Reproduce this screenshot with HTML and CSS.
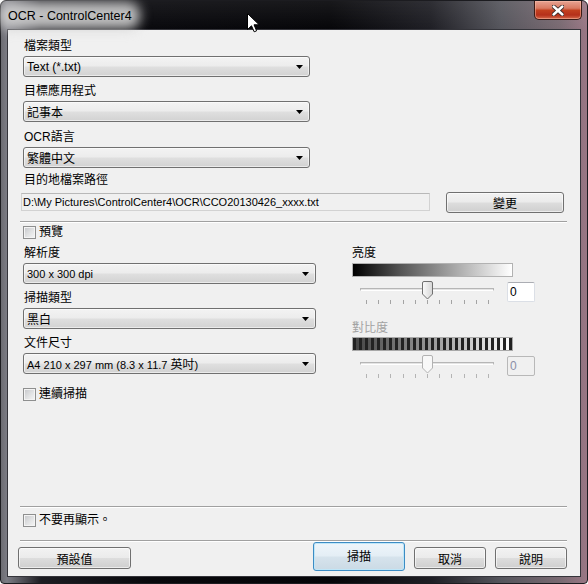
FILE: index.html
```html
<!DOCTYPE html>
<html>
<head>
    <link rel="stylesheet" href="styles.css">
</head>

<body>
<div class="window">
    <div class="titlebar">
        <div class="title">OCR - ControlCenter4</div>
        <div class="close-btn">
            <svg width="12" height="11" viewBox="0 0 12 11">
                <path d="M1 1 L11 10 M11 1 L1 10" stroke="#3a2a28" stroke-width="4.2" stroke-linecap="round"/>
                <path d="M1.6 1.5 L10.4 9.5 M10.4 1.5 L1.6 9.5" stroke="#fff" stroke-width="2.4" stroke-linecap="round"/>
            </svg>
        </div>
    </div>

    <div class="client">
        <div class="lbl first">檔案類型</div>
        <div class="combo"><span>Text (*.txt)</span><svg class="arrow" width="7" height="4" viewBox="0 0 7 4"><path d="M0 0H7L3.5 4Z"/></svg></div>

        <div class="lbl">目標應用程式</div>
        <div class="combo"><span>記事本</span><svg class="arrow" width="7" height="4" viewBox="0 0 7 4"><path d="M0 0H7L3.5 4Z"/></svg></div>

        <div class="lbl lbl-loose">OCR語言</div>
        <div class="combo"><span>繁體中文</span><svg class="arrow" width="7" height="4" viewBox="0 0 7 4"><path d="M0 0H7L3.5 4Z"/></svg></div>

        <div class="lbl lbl-close">目的地檔案路徑</div>
        <div class="path-row">
            <div class="path-box">D:\My Pictures\ControlCenter4\OCR\CCO20130426_xxxx.txt</div>
            <div class="btn btn-change">變更</div>
        </div>

        <div class="sep sep-top"></div>

        <div class="check check-preview"><span class="box"></span>預覽</div>

        <div class="scan-grid">
            <div class="col-left">
                <div class="lbl first">解析度</div>
                <div class="combo wide"><span class="latin">300 x 300 dpi</span><svg class="arrow" width="7" height="4" viewBox="0 0 7 4"><path d="M0 0H7L3.5 4Z"/></svg></div>

                <div class="lbl">掃描類型</div>
                <div class="combo wide"><span>黑白</span><svg class="arrow" width="7" height="4" viewBox="0 0 7 4"><path d="M0 0H7L3.5 4Z"/></svg></div>

                <div class="lbl">文件尺寸</div>
                <div class="combo wide"><span class="latin">A4 210 x 297 mm (8.3 x 11.7 <span class="cjk">英吋</span>)</span><svg class="arrow" width="7" height="4" viewBox="0 0 7 4"><path d="M0 0H7L3.5 4Z"/></svg></div>

                <div class="check check-cont"><span class="box"></span>連續掃描</div>
            </div>

            <div class="col-right">
                <div class="lbl first">亮度</div>
                <div class="bar bar-bright"></div>
                <div class="slider-row">
                    <div class="slider">
                        <div class="track"></div>
                        <div class="ticks">
                            <i></i><i></i><i></i><i></i><i></i><i></i><i></i><i></i><i></i><i></i><i></i>
                        </div>
                        <svg class="thumb" width="11" height="19" viewBox="0 0 11 19">
                            <defs>
                                <linearGradient id="thumbFill" x1="0" y1="0" x2="1" y2="0">
                                    <stop offset="0" stop-color="#fafafa"/>
                                    <stop offset="1" stop-color="#d6d6d6"/>
                                </linearGradient>
                            </defs>
                            <path d="M2 0.5H9Q10.5 0.5 10.5 2V13L5.5 18L0.5 13V2Q0.5 0.5 2 0.5Z" fill="url(#thumbFill)" stroke="#6f6f6f"/>
                        </svg>
                    </div>
                    <div class="num">0</div>
                </div>

                <div class="lbl lbl-disabled">對比度</div>
                <div class="bar bar-contrast"></div>
                <div class="slider-row">
                    <div class="slider disabled">
                        <div class="track"></div>
                        <div class="ticks">
                            <i></i><i></i><i></i><i></i><i></i><i></i><i></i><i></i><i></i><i></i><i></i>
                        </div>
                        <svg class="thumb" width="11" height="19" viewBox="0 0 11 19">
                            <path d="M2 0.5H9Q10.5 0.5 10.5 2V13L5.5 18L0.5 13V2Q0.5 0.5 2 0.5Z" fill="#f8f8f8" stroke="#b2b2b2"/>
                        </svg>
                    </div>
                    <div class="num num-disabled">0</div>
                </div>
            </div>
        </div>

        <div class="sep sep-bottom"></div>

        <div class="check check-hide"><span class="box"></span>不要再顯示。</div>

        <div class="sep sep-last"></div>

        <div class="btn-row">
            <div class="btn btn-default">預設值</div>
            <div class="btn btn-scan">掃描</div>
            <div class="btn btn-small">取消</div>
            <div class="btn btn-small">說明</div>
        </div>
    </div>

    <svg class="cursor" width="13" height="20" viewBox="0 0 13 20">
        <path d="M0.5 0.5V16.5L4.5 12.8L7.2 18.8L9.6 17.8L7 11.8H12.2Z" fill="#fff" stroke="#000" stroke-linejoin="round"/>
    </svg>
</div>
</body>
</html>
```

FILE: styles.css
```css
body, html {
margin: 0;
padding: 0;
}

body {
width: 588px;
height: 584px;
overflow: hidden;
font-family: "Liberation Sans", "Noto Sans CJK TC", sans-serif;
font-size: 12px;
color: #000;
}

.window {
position: relative;
width: 588px;
height: 584px;
box-sizing: border-box;
border: 1px solid #1c1c20;
border-radius: 6px 6px 4px 4px;
background:
    linear-gradient(to bottom, rgba(255,255,255,0.08), rgba(255,255,255,0) 30px),
    linear-gradient(to right, #6c6c72 0, #7c7c84 6px, #1c1c22 40px, #08080c 150px, #050508 330px, #1e1e24 430px, #55555c 500px, #7a6a72 560px, #9c7886 588px);
display: flex;
flex-direction: column;
}

/* title bar */
.titlebar {
height: 28px;
display: flex;
justify-content: space-between;
align-items: flex-start;
}

.title {
position: relative;
z-index: 0;
margin-left: 7px;
margin-top: 7px;
line-height: 16px;
font-size: 12.5px;
color: #000;
}

.title::before {
content: "";
position: absolute;
top: -6px;
bottom: -5px;
left: -10px;
right: -8px;
z-index: -1;
background: rgba(210, 210, 210, 0.9);
border-radius: 12px;
filter: blur(6px);
}

.close-btn {
width: 48px;
height: 19px;
margin-right: 5px;
box-sizing: border-box;
border: 1px solid #3c1c16;
border-top: none;
border-radius: 0 0 5px 5px;
background: linear-gradient(to bottom, #e7a393 0, #d87a62 40%, #c2401f 52%, #b5301a 78%, #d56a4c 100%);
box-shadow: inset 0 0 0 1px rgba(255, 200, 180, 0.45);
display: flex;
align-items: center;
justify-content: center;
}

.cursor {
position: absolute;
left: 246px;
top: 12px;
}

/* client area */
.client {
flex: 1;
margin: 0 6px 6px 6px;
background-color: #f0f0f0;
border: 1px solid #34343a;
padding: 8px 13px 5px 12px;
display: flex;
flex-direction: column;
}

.lbl {
line-height: 16px;
padding-left: 4px;
margin-top: 6px;
white-space: nowrap;
}

.lbl.first {
margin-top: 0;
}

.lbl-loose {
margin-top: 7px;
}

.lbl-close {
margin-top: 4px;
}

.lbl-disabled {
color: #a2a2a2;
margin-top: 14px;
}

.combo {
width: 287px;
height: 21px;
margin-top: 2px;
margin-left: 3px;
box-sizing: border-box;
border: 1px solid #707070;
border-radius: 3px;
background: linear-gradient(to bottom, #f3f3f3 0, #ececec 48%, #dfdfdf 52%, #d2d2d2 100%);
box-shadow: inset 0 0 0 1px rgba(255, 255, 255, 0.55);
display: flex;
align-items: center;
justify-content: space-between;
padding: 0 6px 0 3px;
white-space: nowrap;
}

.combo.wide {
width: 293px;
}

.latin {
font-size: 11px;
}

.latin .cjk {
font-size: 12px;
}

.arrow {
fill: #000;
}

/* destination path */
.path-row {
margin-top: 4px;
height: 21px;
display: flex;
align-items: flex-start;
}

.path-box {
width: 409px;
height: 18px;
margin-top: 1px;
margin-left: 1px;
box-sizing: border-box;
border: 1px solid #d2d2d2;
border-top-color: #b8b8b8;
background-color: #f0f0f0;
padding-left: 1px;
font-size: 11px;
line-height: 16px;
white-space: nowrap;
}

.btn {
box-sizing: border-box;
border: 1px solid #707070;
border-radius: 3px;
background: linear-gradient(to bottom, #f2f2f2 0, #ebebeb 48%, #dddddd 52%, #cfcfcf 100%);
box-shadow: inset 0 0 0 1px rgba(255, 255, 255, 0.6);
display: flex;
align-items: center;
justify-content: center;
}

.btn-change {
width: 118px;
height: 21px;
margin-left: 16px;
}

/* separators and check boxes */
.sep {
height: 0;
border-top: 1px solid #a0a0a0;
border-bottom: 1px solid #ffffff;
}

.sep-top {
margin-top: 8px;
}

.sep-bottom {
margin-top: auto;
}

.sep-last {
margin-top: 12px;
}

.check {
display: flex;
align-items: center;
gap: 3px;
margin-left: 3px;
line-height: 16px;
}

.check-preview {
margin-top: 1px;
}

.check-cont {
margin-top: 12px;
}

.check-hide {
margin-top: 4px;
}

.box {
width: 13px;
height: 13px;
box-sizing: border-box;
border: 1px solid #8e8f8f;
background: linear-gradient(135deg, #c4c6c9 0, #e2e3e4 55%, #f6f6f6 100%);
box-shadow: inset 0 0 0 1px #f4f4f4;
}

/* scanning settings */
.scan-grid {
margin-top: 5px;
display: grid;
grid-template-columns: 296px 1fr;
column-gap: 36px;
}

.col-left, .col-right {
display: flex;
flex-direction: column;
}

.col-right .lbl {
padding-left: 0;
}

.bar {
width: 161px;
height: 14px;
margin-top: 2px;
box-sizing: border-box;
border: 1px solid #b2b2b2;
}

.bar-bright {
background: linear-gradient(to right, #000 0, #555 30%, #aaa 65%, #fff 100%);
}

.bar-contrast {
margin-top: 1px;
border-color: #a8a8a8;
background:
    repeating-linear-gradient(to right, #222 0, #222 3px, transparent 3px, transparent 6px),
    linear-gradient(to right, #444 0, #9a9a9a 50%, #fff 100%);
}

.slider-row {
margin-top: 4px;
display: flex;
align-items: flex-start;
}

.slider {
position: relative;
width: 134px;
height: 25px;
margin-left: 8px;
}

.track {
margin-top: 7px;
height: 3px;
box-sizing: border-box;
border: 1px solid #b6b6b6;
border-bottom-color: #ffffff;
background-color: #e4e4e4;
}

.ticks {
margin-top: 9px;
padding: 0 5px 0 6px;
display: flex;
justify-content: space-between;
}

.ticks i {
width: 1px;
height: 4px;
background-color: #a4a4a4;
}

.slider.disabled .ticks i {
background-color: #b4b4b4;
}

.thumb {
position: absolute;
left: 62px;
top: 0;
}

.num {
width: 28px;
height: 20px;
margin-top: 1px;
margin-left: 13px;
box-sizing: border-box;
border: 1px solid #dbdfe6;
border-top-color: #abadb3;
border-radius: 2px;
background-color: #fff;
padding-left: 2px;
line-height: 18px;
}

.num-disabled {
border-color: #b8b8b8;
background-color: #f0f0f0;
color: #8a8fa8;
}

/* bottom buttons */
.btn-row {
display: flex;
align-items: flex-end;
gap: 9px;
}

.btn-row .btn {
height: 22px;
margin-bottom: 2px;
}

.btn-default {
width: 113px;
margin-left: -2px;
margin-right: auto;
}

.btn-row .btn-scan {
width: 92px;
height: 29px;
margin-bottom: 0;
border-color: #3c8cc4;
background: linear-gradient(to bottom, #eef5fa 0, #e4eef5 48%, #d6e3ec 52%, #cbdae5 100%);
box-shadow: inset 0 0 0 1px #bfe6f8;
padding-bottom: 2px;
}

.btn-small {
width: 72px;
}
```
